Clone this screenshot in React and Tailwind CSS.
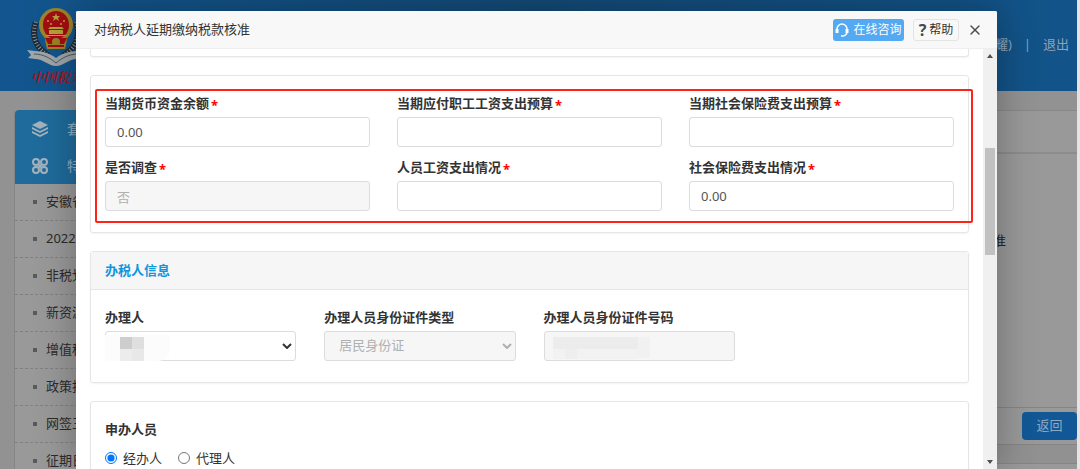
import { X } from "lucide-react";

const menuItems = ["安徽省", "2022年", "非税划", "新资源", "增值税", "政策指", "网签三", "征期日"];

const budgetFields = [
  { id: "cash", label: "当期货币资金余额", value: "0.00" },
  { id: "payBudget", label: "当期应付职工工资支出预算", value: "" },
  { id: "socialBudget", label: "当期社会保险费支出预算", value: "" },
  { id: "survey", label: "是否调查", value: "否", disabled: true },
  { id: "pay", label: "人员工资支出情况", value: "" },
  { id: "social", label: "社会保险费支出情况", value: "0.00" },
];

function Emblem() {
  return (
    <svg viewBox="0 0 58 60" className="w-[58px] h-[60px] block">
      {/* wheat ears on both sides */}
      <g fill="none" stroke="#1c2a35" strokeWidth="6">
        <path d="M9 15 C4 29 9 41 22 49" />
        <path d="M49 15 C54 29 49 41 36 49" />
      </g>
      <g fill="none" stroke="#8e9396" strokeWidth="4" strokeDasharray="1 2">
        <path d="M9 15 C4 29 9 41 22 49" />
        <path d="M49 15 C54 29 49 41 36 49" />
      </g>
      <ellipse cx="29" cy="18" rx="17" ry="17" fill="#9c8427" />
      <path d="M17 28h24l-3 14H20z" fill="#9c8427" />
      <ellipse cx="29" cy="18" rx="13" ry="14" fill="#a30d12" />
      <path d="M29 6l1 3h3l-2 2 1 3-3-2-3 2 1-3-2-2h3z" fill="#b9a03a" />
      <g fill="#b9a03a">
        <circle cx="21" cy="14" r="1" />
        <circle cx="24" cy="17" r="1" />
        <circle cx="34" cy="17" r="1" />
        <circle cx="37" cy="14" r="1" />
        <path d="M23 20h12l2 2H21zM22 23h14v4H22zM19 28h20v1H19z" />
      </g>
      <path d="M18 31h22l-3 6H21z" fill="#a30d12" />
      <circle cx="29" cy="35" r="4" fill="#9c8427" />
      <path d="M21 39h16" stroke="#a30d12" strokeWidth="2" />
      <path d="M0 43l8 1c8 0 16 3 21 7 5-4 13-7 21-7l8-1-3 5 2 3-7 1c-8 0-14 7-21 7s-13-7-21-7l-7-1 3-3z" fill="#a0a5a8" />
      <path d="M7 47c9 0 16 4 22 9 6-5 13-9 22-9" fill="none" stroke="#465865" strokeWidth="1" />
    </svg>
  );
}

function Backdrop() {
  return (
    <div className="flex h-full">
      <div className="flex-1 min-w-0 flex flex-col bg-[#929292]">
        <header className="h-[91px] shrink-0 flex items-start justify-between pl-[27px] pr-2 bg-linear-to-r from-[#12568f] via-[#134a77] to-[#12548a]">
          <div className="pt-[7px]">
            <Emblem />
            <p className="pl-1 text-[13px] leading-5 italic font-bold text-[#a3141c] whitespace-nowrap font-['Noto_Serif_CJK_SC','Noto_Sans_CJK_SC',serif]">中国税务</p>
          </div>
          <div className="flex gap-3 pt-[34px] leading-5 text-[13px] text-[#8fa3b5]">
            <span>(吴耀)</span>
            <span>|</span>
            <a href="#logout">退出</a>
          </div>
        </header>
        <div className="flex-1 min-h-0 flex pt-[19px] pl-[14px]">
          <aside className="w-[220px] shrink-0 border-l border-[#858585] bg-[#999]">
            <nav>
              <div className="h-[74px] rounded-tl-sm bg-[#1f6b9c] text-[#8fb0c6] text-[14px]">
                <a href="#package" className="h-[37px] flex items-center gap-[18px] pl-4">
                  <svg viewBox="0 0 18 18" className="size-[18px]" fill="#a3b3bd">
                    <path d="M9 1l8 4-8 4-8-4z" />
                    <path d="M1 7l8 4 8-4v2l-8 4-8-4z" />
                    <path d="M1 11l8 4 8-4v2l-8 4-8-4z" />
                  </svg>
                  套
                </a>
                <a href="#special" className="h-[37px] flex items-center gap-[18px] pl-4">
                  <svg viewBox="0 0 18 18" className="size-[18px]" fill="none" stroke="#a3b3bd" strokeWidth="2">
                    <circle cx="5" cy="5" r="3" />
                    <circle cx="13" cy="5" r="3" />
                    <circle cx="5" cy="13" r="3" />
                    <circle cx="13" cy="13" r="3" />
                    <path d="M7 7l4 4M11 7l-4 4" />
                  </svg>
                  特
                </a>
              </div>
              {menuItems.map((item) => (
                <a key={item} href="#menu" className="h-[37px] flex items-center gap-[9px] pl-[18px] border-b border-dashed border-[#808080] text-[13px] text-[#2b2b2b]">
                  <span className="size-1 bg-[#5a5a5a]" />
                  {item}
                </a>
              ))}
            </nav>
          </aside>
          <main className="flex-1 flex flex-col bg-[#999] ml-4 border-t border-[#888]">
            <div className="h-[43px] border-b-2 border-[#8c8c8c]" />
            <div className="flex-1 pt-[76px] pr-[71px] text-right text-[13px] leading-5 text-[#222]">核准</div>
            <div className="h-[38px] flex justify-end items-center border-y border-[#858585]">
              <button className="w-[55px] h-7 rounded-sm bg-[#125896] text-[13px] text-[#8fa9c0]">返回</button>
            </div>
            <div className="h-[19px] border-b border-[#858585] bg-[#919191]" />
            <div className="h-[5px]" />
          </main>
        </div>
      </div>
      <div className="w-[3px] bg-[#e4e4e4]" />
    </div>
  );
}

function Field({ id, label, required, children }) {
  return (
    <div className="min-w-0">
      <label htmlFor={id} className="flex h-5 mb-1 gap-[2px] text-[13px] leading-5 font-bold text-[#333] whitespace-nowrap">
        {label}
        {required && <span className="text-[13px] leading-6 text-[#f00]">*</span>}
      </label>
      {children}
    </div>
  );
}

function Chevron({ className }) {
  return (
    <svg viewBox="0 0 10 6" fill="none" strokeWidth="2" className={`absolute right-1 top-3 w-[10px] h-[6px] pointer-events-none ${className}`}>
      <path d="M1 1l4 4 4-4" />
    </svg>
  );
}

const inputClass = "block w-full h-[30px] px-[11px] border border-[#dcdcdc] rounded-[3px] bg-white text-[13px] text-[#555] disabled:bg-[#f6f6f6] disabled:text-[#b0b0b0] disabled:opacity-100";
const cardClass = "border border-[#e6e6e6] rounded-[3px] shadow-xs";

export default function App() {
  return (
    <div className="relative h-screen overflow-hidden font-['Noto_Sans','Noto_Sans_CJK_SC',sans-serif]">
      <Backdrop />

      <div role="dialog" aria-label="对纳税人延期缴纳税款核准" className="absolute left-[76px] right-[83px] top-[11px] bottom-0 flex flex-col bg-white rounded-t-xs shadow-[0_0_40px_rgba(0,0,0,0.3)]">
        <div className="h-[38px] shrink-0 flex items-center pl-[18px] pr-[14px] border-b border-[#eee] bg-[#f8f8f8] rounded-t-xs">
          <h2 className="flex-1 text-[13px] text-[#333]">对纳税人延期缴纳税款核准</h2>
          <button className="w-[71px] h-[22px] flex items-center justify-center gap-1 rounded-[3px] bg-[#53a9f2] text-[12px] text-white">
            <svg viewBox="0 0 14 14" className="size-[14px]" fill="none" stroke="#fff">
              <path d="M2 8V6a5 5 0 0 1 10 0v2" strokeWidth="1.5" />
              <path d="M2 6v4M12 6v4" strokeWidth="3" />
              <path d="M12 9c0 2-2 4-4 4H6" strokeWidth="1.5" />
            </svg>
            在线咨询
          </button>
          <button className="w-[46px] h-[22px] ml-[9px] flex items-center justify-center gap-[3px] border border-[#e4e4e4] rounded-[3px] text-[12px] text-[#333]">
            <span className="text-[16px] leading-5 font-bold text-[#454852]">?</span>
            帮助
          </button>
          <button aria-label="关闭" className="ml-2 text-[#444b55]">
            <X size={16} strokeWidth={2} />
          </button>
        </div>

        <div className="flex-1 min-h-0 flex">
          <div className="flex-1 min-w-0 px-[14px] overflow-hidden">
            <section className={`${cardClass} h-2 border-t-0 rounded-t-none`} />

            <section className={`${cardClass} relative mt-[18px] px-[14px] pt-[17px] pb-[21px]`}>
              <div className="grid grid-cols-3 gap-x-[27px] gap-y-[10px]">
                {budgetFields.map((f) => (
                  <Field key={f.id} id={f.id} label={f.label} required>
                    <input id={f.id} type="text" defaultValue={f.value} disabled={f.disabled} className={inputClass} />
                  </Field>
                ))}
              </div>
              <div className="absolute left-1 -right-[5px] top-[13px] bottom-[9px] border-2 border-[#ff2318] rounded-xs pointer-events-none" />
            </section>

            <section className={`${cardClass} mt-[18px]`}>
              <h3 className="h-[38px] flex items-center px-[14px] border-b border-[#e6e6e6] bg-[#f6f6f6] text-[13px] font-bold text-[#1296db]">办税人信息</h3>
              <div className="grid grid-cols-4 gap-x-7 px-[14px] pt-[17px] pb-[21px]">
                <Field id="agent" label="办理人">
                  <div className="relative">
                    <select id="agent" className={`${inputClass} appearance-none`} />
                    <Chevron className="stroke-[#333]" />
                    {/* masked name */}
                    <div className="absolute left-0 top-1 w-[65px] h-[26px] pl-[15px] pt-[2px] rounded-br-xl bg-[#fcfcfc] pointer-events-none">
                      <div className="grid grid-cols-2 w-6">
                        <span className="h-3 bg-[#cdcdcd]" />
                        <span className="h-3 bg-[#dfdfdf]" />
                        <span className="h-3 bg-[#ececec]" />
                        <span className="h-3 bg-[#e8e8e8]" />
                      </div>
                    </div>
                  </div>
                </Field>
                <Field id="idType" label="办理人员身份证件类型">
                  <div className="relative">
                    <select id="idType" disabled className={`${inputClass} appearance-none pl-[14px]`}>
                      <option>居民身份证</option>
                    </select>
                    <Chevron className="stroke-[#b0b0b0]" />
                  </div>
                </Field>
                <Field id="idNo" label="办理人员身份证件号码">
                  <div className="relative">
                    <input id="idNo" type="text" disabled className={inputClass} />
                    {/* masked number */}
                    <div className="absolute left-[9px] top-[6px] flex pointer-events-none">
                      <div className="w-[85px] bg-[#f2f2f2]">
                        <div className="h-3 bg-[#ececec]" />
                        <div className="h-[10px] ml-3 w-3 bg-[#eeeeee]" />
                      </div>
                      <div className="w-3 h-[21px] bg-[#f1f1f1]" />
                    </div>
                  </div>
                </Field>
              </div>
            </section>

            <section className={`${cardClass} mt-[18px] px-[14px] pt-[17px] pb-[21px]`}>
              <fieldset className="text-[13px] leading-5 text-[#333]">
                <legend className="font-bold">申办人员</legend>
                <div className="flex gap-4 pt-[9px]">
                  <label className="flex items-center gap-[6px]">
                    <input type="radio" name="applicant" defaultChecked className="size-3" />
                    经办人
                  </label>
                  <label className="flex items-center gap-[6px]">
                    <input type="radio" name="applicant" className="size-3" />
                    代理人
                  </label>
                </div>
              </fieldset>
            </section>
          </div>

          {/* scrollbar */}
          <div className="w-[14px] flex flex-col items-center justify-between py-[5px] bg-[#f0f0f0]">
            <svg viewBox="0 0 6 4" className="w-[6px] h-1" fill="#505050"><path d="M0 4l3-4 3 4z" /></svg>
            <div className="flex-1 w-full px-[2px] pt-[90px]">
              <div className="h-[107px] bg-[#c1c1c1]" />
            </div>
            <svg viewBox="0 0 6 4" className="w-[6px] h-1" fill="#505050"><path d="M0 0l3 4 3-4z" /></svg>
          </div>
        </div>
      </div>
    </div>
  );
}
